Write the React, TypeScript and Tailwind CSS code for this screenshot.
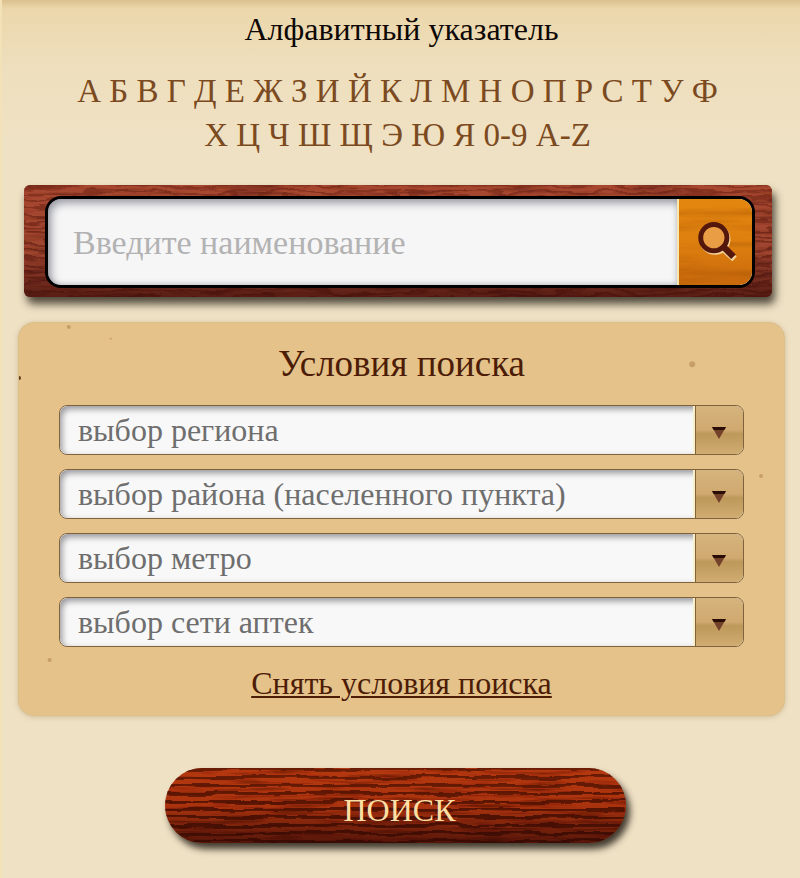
import React, { useId, useState } from 'react';

const LETTERS = [
  'А', 'Б', 'В', 'Г', 'Д', 'Е', 'Ж', 'З', 'И', 'Й', 'К', 'Л', 'М', 'Н', 'О', 'П',
  'Р', 'С', 'Т', 'У', 'Ф', 'Х', 'Ц', 'Ч', 'Ш', 'Щ', 'Э', 'Ю', 'Я', '0-9', 'A-Z',
];

const FILTERS = [
  { name: 'region', label: 'выбор региона' },
  { name: 'district', label: 'выбор района (населенного пункта)' },
  { name: 'metro', label: 'выбор метро' },
  { name: 'network', label: 'выбор сети аптек' },
];

interface GrainProps {
  frequency: string;
  seed: number;
  color: string;
  strength: number;
}

// Soft wood grain: stretched noise tinted with one colour
function Grain({ frequency, seed, color, strength }: GrainProps) {
  const id = useId();

  return (
    <svg className="pointer-events-none absolute inset-0 h-full w-full" aria-hidden="true">
      <filter id={id} x="0" y="0" width="100%" height="100%">
        <feTurbulence type="fractalNoise" baseFrequency={frequency} numOctaves="3" seed={seed} />
        <feColorMatrix values={`0 0 0 0 0  0 0 0 0 0  0 0 0 0 0  ${strength} 0 0 0 ${-strength * 0.46}`} result="streaks" />
        <feFlood floodColor={color} />
        <feComposite in2="streaks" operator="in" />
      </filter>
      <rect width="100%" height="100%" filter={`url(#${id})`} />
    </svg>
  );
}

interface RingsProps {
  step: number;
  wobble: number;
  color: string;
  opacity: number;
}

// Growth rings: parallel lines pushed out of true by noise
function Rings({ step, wobble, color, opacity }: RingsProps) {
  const id = useId();

  return (
    <svg className="pointer-events-none absolute inset-0 h-full w-full" aria-hidden="true">
      <pattern id={`${id}-lines`} width="40" height={step} patternUnits="userSpaceOnUse">
        <rect width="40" height={step * 0.36} fill={color} />
      </pattern>
      <filter id={`${id}-warp`} x="0" y="-20%" width="100%" height="140%">
        <feTurbulence type="fractalNoise" baseFrequency="0.02 0.07" numOctaves="4" seed="7" />
        <feDisplacementMap in="SourceGraphic" scale={wobble} xChannelSelector="R" yChannelSelector="G" />
      </filter>
      <rect
        y="-10%"
        width="100%"
        height="120%"
        fill={`url(#${id}-lines)`}
        opacity={opacity}
        filter={`url(#${id}-warp)`}
      />
    </svg>
  );
}

function Magnifier() {
  return (
    <svg className="relative h-12 w-12" viewBox="0 0 44 44" fill="none" aria-hidden="true">
      <g stroke="#f6d49a" transform="translate(1 1.500)">
        <circle cx="20" cy="18" r="12" strokeWidth="4.500" />
        <path d="M28 27L38 36" strokeWidth="6" />
      </g>
      <circle cx="20" cy="18" r="12" fill="#e99e45" stroke="#54170c" strokeWidth="4.500" />
      <path d="M27 25L31 29" stroke="#54170c" strokeWidth="4" />
      <path d="M29.500 27L38 35.500" stroke="#54170c" strokeWidth="6" />
    </svg>
  );
}

function Specks() {
  return (
    <svg className="pointer-events-none absolute inset-0 h-full w-full" aria-hidden="true">
      <g fill="#a5763c" fillOpacity="0.45">
        <circle cx="6.5%" cy="1%" r="2" />
        <circle cx="88%" cy="10.500%" r="3" />
        <circle cx="97%" cy="39%" r="2" />
        <circle cx="4%" cy="86%" r="2" />
        <circle cx="12%" cy="4%" r="1" />
      </g>
      <circle cx="0" cy="14%" r="2" fill="#5a3a18" />
    </svg>
  );
}

export default function App() {
  const [query, setQuery] = useState('');

  return (
    <div className="min-h-screen overflow-hidden border-l-2 border-[#f3e2b8] bg-[#efe1c4] bg-[linear-gradient(to_bottom,#dcc08e_0px,#e3cb9b_4px,#ecd7ab_9px,#eedfbe_70px,#efe1c4_160px)] pr-[15px] pb-9 pl-4 font-['Liberation_Serif',serif]">
      <header className="pt-[7px] text-center">
        <h1 className="text-[32px] leading-[44px] text-[#0d0805]">Алфавитный указатель</h1>
        <nav className="mt-[18px] pr-[58px] pl-[50px] text-[33px] leading-[44px] text-[#7b4a20]">
          {LETTERS.map((letter) => (
            <React.Fragment key={letter}>
              <a href={`#${letter}`} className="whitespace-nowrap">{letter}</a>{' '}
            </React.Fragment>
          ))}
        </nav>
      </header>

      <form onSubmit={(e) => e.preventDefault()}>
        <div className="relative mt-7 mr-[13px] ml-1.5 rounded-md bg-[#a04630] pt-[11px] pr-[17px] pb-[9px] pl-[21px] shadow-[3px_7px_8px_rgba(40,35,25,0.8)]">
          <div className="absolute inset-0 overflow-hidden rounded-md">
            <Grain frequency="0.015 0.2" seed={4} color="#5a1c12" strength={2} />
            <Rings step={7} wobble={18} color="#56180f" opacity={0.5} />
            <div className="absolute inset-0 bg-linear-to-b from-[#c04a2a]/20 via-transparent via-60% to-[#3a0c08]/70" />
          </div>
          <div className="relative flex h-[92px] overflow-hidden rounded-2xl border-3 border-black bg-[#f6f6f7]">
            <input
              type="text"
              aria-label="Введите наименование"
              placeholder="Введите наименование"
              value={query}
              onChange={(e) => setQuery(e.target.value)}
              className="min-w-0 flex-1 rounded-l-xl bg-transparent px-[25px] text-[34px] text-[#444] shadow-[inset_3px_4px_8px_rgba(60,60,80,0.5),inset_0_-2px_4px_rgba(60,60,80,0.15)] outline-none placeholder:text-[#b2b2b2]"
            />
            <button
              type="submit"
              aria-label="Найти"
              className="relative flex w-[75px] items-center justify-center overflow-hidden rounded-r-xl border-l-2 border-[#f8e8b0] bg-linear-to-b from-[#e3860f] via-[#de800f] to-[#c8690c]"
            >
              <Grain frequency="0.008 0.09" seed={9} color="#9c4a08" strength={1} />
              <Magnifier />
            </button>
          </div>
        </div>

        <section className="relative mt-[25px] overflow-hidden rounded-2xl border border-[#dcbf8b] bg-[#e4c289] px-10 pt-[21px] pb-3 shadow-[0_1px_5px_rgba(150,120,70,0.35)]">
          <Specks />
          <h2 className="relative text-center text-[37px] leading-10 text-[#4c1c06]">Условия поиска</h2>
          <div className="relative mt-[21px] flex flex-col gap-3.5">
            {FILTERS.map((filter) => (
              <div key={filter.name} className="relative flex h-[50px] overflow-hidden rounded-lg border border-[#80633c] bg-[#f8f8f8]">
                <select
                  name={filter.name}
                  aria-label={filter.label}
                  className="w-full appearance-none rounded-lg bg-transparent pr-14 pb-1 pl-[18px] text-[32px] text-[#6e6e6e] shadow-[inset_2px_3px_6px_rgba(50,50,60,0.5)] outline-none"
                >
                  <option>{filter.label}</option>
                </select>
                <span className="pointer-events-none absolute inset-y-0 right-0 flex w-[50px] items-center justify-center border-l-2 border-[#f8f0c8] bg-[linear-gradient(to_bottom,#d6b47e,#cfa96f_50%,#bd985a_58%,#d2ad73)] shadow-[inset_1px_0_0_#80633c]">
                  <svg className="mt-1.5 h-3 w-3.5" viewBox="0 0 12 12" preserveAspectRatio="none" aria-hidden="true">
                    <path d="M0 0H12L6 12Z" fill="#73402a" />
                    <path d="M0 0H12L10.500 3H1.500Z" fill="#2a0d06" />
                  </svg>
                </span>
              </div>
            ))}
          </div>
          <div className="relative mt-4 text-center text-[32px] leading-10 text-[#4c1c06]">
            <a href="#reset" className="underline decoration-2 underline-offset-2">Снять условия поиска</a>
          </div>
        </section>

        <div className="mt-[52px] flex justify-center pr-3">
          <button
            type="submit"
            className="relative h-[75px] w-[61%] rounded-full bg-[#b0370f] pt-2 pl-2 text-[32px] text-[#fbdfa4] shadow-[4px_6px_7px_rgba(35,28,20,0.85)]"
          >
            <span className="absolute inset-0 overflow-hidden rounded-full">
              <Grain frequency="0.02 0.3" seed={12} color="#5a1005" strength={2} />
              <Rings step={8} wobble={8} color="#3f0a05" opacity={0.85} />
              <span className="absolute inset-0 bg-linear-to-b from-[#c23c10]/25 via-[#8a2008]/15 via-50% to-[#300806]/70" />
            </span>
            <span className="relative">ПОИСК</span>
          </button>
        </div>
      </form>
    </div>
  );
}
